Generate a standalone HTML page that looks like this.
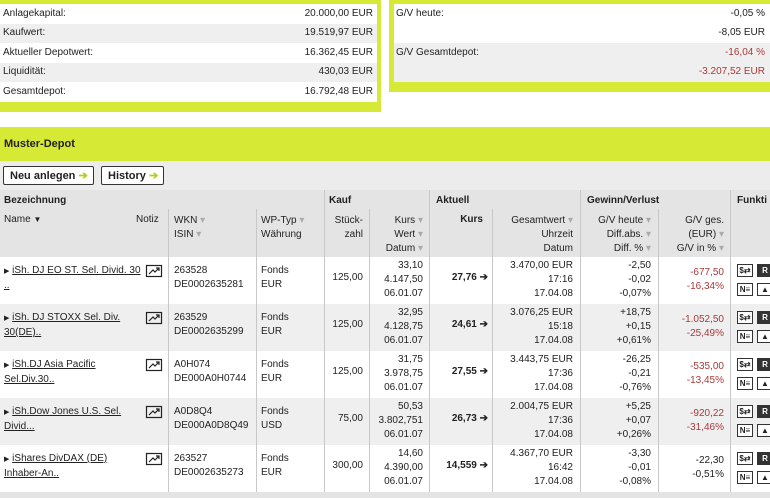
<!DOCTYPE html>
<html><head><meta charset="utf-8"><style>
*{margin:0;padding:0;box-sizing:border-box}
body{width:770px;height:498px;overflow:hidden;background:#fff;font-family:"Liberation Sans",Arial,sans-serif;font-size:10px;color:#222;position:relative}
.a{position:absolute;white-space:nowrap}
.r{position:absolute;text-align:right;white-space:nowrap}
.g{background:#d5e935}
.row{position:absolute;left:0;width:770px;height:47px}
.l{position:absolute;width:1px;background:#c8c8c8}
.red{color:#a83a3a}
u{text-decoration:underline}
.ic{position:absolute;width:16px;height:13px;border:1px solid #333;font-size:8px;font-weight:bold;line-height:11px;text-align:center;background:#fff}
.sd{color:#aaa}
</style></head><body>
<div class="a g" style="left:0;top:0;width:381px;height:112px"></div>
<div class="a" style="left:0;top:4px;width:377px;height:20px;background:#fff"></div>
<div class="a" style="left:0;top:24px;width:377px;height:19px;background:#efefef"></div>
<div class="a" style="left:0;top:43px;width:377px;height:20px;background:#fff"></div>
<div class="a" style="left:0;top:63px;width:377px;height:19px;background:#efefef"></div>
<div class="a" style="left:0;top:82px;width:377px;height:20px;background:#fff"></div>
<div class="a" style="left:3px;top:8px">Anlagekapital:</div><div class="r" style="right:397px;top:8px">20.000,00 EUR</div>
<div class="a" style="left:3px;top:27px">Kaufwert:</div><div class="r" style="right:397px;top:27px">19.519,97 EUR</div>
<div class="a" style="left:3px;top:47px">Aktueller Depotwert:</div><div class="r" style="right:397px;top:47px">16.362,45 EUR</div>
<div class="a" style="left:3px;top:66px">Liquidität:</div><div class="r" style="right:397px;top:66px">430,03 EUR</div>
<div class="a" style="left:3px;top:86px">Gesamtdepot:</div><div class="r" style="right:397px;top:86px">16.792,48 EUR</div>
<div class="a g" style="left:389px;top:0;width:381px;height:92px"></div>
<div class="a" style="left:394px;top:4px;width:376px;height:39px;background:#fff"></div>
<div class="a" style="left:394px;top:43px;width:376px;height:39px;background:#efefef"></div>
<div class="a" style="left:396px;top:8px">G/V heute:</div><div class="r" style="right:5px;top:8px">-0,05 %</div>
<div class="r" style="right:5px;top:27px">-8,05 EUR</div>
<div class="a" style="left:396px;top:47px">G/V Gesamtdepot:</div><div class="r red" style="right:5px;top:47px">-16,04 %</div>
<div class="r red" style="right:5px;top:66px">-3.207,52 EUR</div>
<div class="a g" style="left:0;top:127px;width:770px;height:34px"></div>
<div class="a" style="left:4px;top:138px;font-weight:bold;font-size:11px">Muster-Depot</div>
<div class="a" style="left:0;top:161px;width:770px;height:29px;background:#ececec"></div>
<div class="a" style="left:3px;top:166px;width:91px;height:19px;border:1px solid #333;border-radius:2px;background:#fff;font-weight:bold;font-size:11px;padding:2px 0 0 6px">Neu anlegen <span style="color:#b8cc20">➔</span></div>
<div class="a" style="left:101px;top:166px;width:63px;height:19px;border:1px solid #333;border-radius:2px;background:#fff;font-weight:bold;font-size:11px;padding:2px 0 0 6px">History <span style="color:#b8cc20">➔</span></div>
<div class="a" style="left:0;top:190px;width:770px;height:67px;background:#e4e4e4"></div>
<div class="a" style="left:4px;top:195px;font-weight:bold">Bezeichnung</div>
<div class="a" style="left:329px;top:195px;font-weight:bold">Kauf</div>
<div class="a" style="left:436px;top:195px;font-weight:bold">Aktuell</div>
<div class="a" style="left:587px;top:195px;font-weight:bold">Gewinn/Verlust</div>
<div class="a" style="left:737px;top:195px;font-weight:bold">Funkti</div>
<div class="a" style="left:4px;top:214px">Name <span style="font-size:8px">▼</span></div>
<div class="a" style="left:136px;top:214px">Notiz</div>
<div class="a" style="left:174px;top:214px;line-height:14px">WKN <span class="sd">▾</span><br>ISIN <span class="sd">▾</span></div>
<div class="a" style="left:261px;top:214px;line-height:14px">WP-Typ <span class="sd">▾</span><br>Währung</div>
<div class="r" style="right:407px;top:214px;line-height:14px">Stück-<br>zahl</div>
<div class="r" style="right:347px;top:214px;line-height:14px">Kurs <span class="sd">▾</span><br>Wert <span class="sd">▾</span><br>Datum <span class="sd">▾</span></div>
<div class="r" style="right:287px;top:214px;font-weight:bold">Kurs</div>
<div class="r" style="right:197px;top:214px;line-height:14px">Gesamtwert <span class="sd">▾</span><br>Uhrzeit<br>Datum</div>
<div class="r" style="right:119px;top:214px;line-height:14px">G/V heute <span class="sd">▾</span><br>Diff.abs. <span class="sd">▾</span><br>Diff. % <span class="sd">▾</span></div>
<div class="r" style="right:46px;top:214px;line-height:14px">G/V ges.<br>(EUR) <span class="sd">▾</span><br>G/V in % <span class="sd">▾</span></div>
<div class="row" style="top:257px;background:#fff"></div>
<div class="row" style="top:304px;background:#efefef"></div>
<div class="row" style="top:351px;background:#fff"></div>
<div class="row" style="top:398px;background:#efefef"></div>
<div class="row" style="top:445px;background:#fff"></div>
<div class="a" style="left:0;top:492px;width:770px;height:6px;background:#e4e4e4"></div>
<div class="l" style="left:168px;top:209px;height:283px"></div>
<div class="l" style="left:256px;top:209px;height:283px"></div>
<div class="l" style="left:324px;top:190px;height:302px"></div>
<div class="l" style="left:369px;top:209px;height:283px"></div>
<div class="l" style="left:429px;top:190px;height:302px"></div>
<div class="l" style="left:492px;top:209px;height:283px"></div>
<div class="l" style="left:580px;top:190px;height:302px"></div>
<div class="l" style="left:658px;top:209px;height:283px"></div>
<div class="l" style="left:730px;top:190px;height:302px"></div>

<div style="position:absolute;left:0;top:257px;width:770px;height:47px;line-height:14px">
<div class="a" style="left:4px;top:7px"><span style="font-size:7px">▶</span> <u>iSh. DJ EO ST. Sel. Divid. 30</u><br><u>..</u></div>
<div class="a" style="left:174px;top:7px">263528<br>DE0002635281</div>
<div class="a" style="left:261px;top:7px">Fonds<br>EUR</div>
<div class="r" style="right:407px;top:14px">125,00</div>
<div class="r" style="right:347px;top:2px">33,10<br>4.147,50<br>06.01.07</div>
<div class="r" style="right:282px;top:14px;font-weight:bold">27,76 ➔</div>
<div class="r" style="right:197px;top:2px">3.470,00 EUR<br>17:16<br>17.04.08</div>
<div class="r" style="right:119px;top:2px">-2,50<br>-0,02<br>-0,07%</div>
<div class="r red" style="right:46px;top:9px">-677,50<br>-16,34%</div>
</div>
<div style="position:absolute;left:0;top:304px;width:770px;height:47px;line-height:14px">
<div class="a" style="left:4px;top:7px"><span style="font-size:7px">▶</span> <u>iSh. DJ STOXX Sel. Div.</u><br><u>30(DE)..</u></div>
<div class="a" style="left:174px;top:7px">263529<br>DE0002635299</div>
<div class="a" style="left:261px;top:7px">Fonds<br>EUR</div>
<div class="r" style="right:407px;top:14px">125,00</div>
<div class="r" style="right:347px;top:2px">32,95<br>4.128,75<br>06.01.07</div>
<div class="r" style="right:282px;top:14px;font-weight:bold">24,61 ➔</div>
<div class="r" style="right:197px;top:2px">3.076,25 EUR<br>15:18<br>17.04.08</div>
<div class="r" style="right:119px;top:2px">+18,75<br>+0,15<br>+0,61%</div>
<div class="r red" style="right:46px;top:9px">-1.052,50<br>-25,49%</div>
</div>
<div style="position:absolute;left:0;top:351px;width:770px;height:47px;line-height:14px">
<div class="a" style="left:4px;top:7px"><span style="font-size:7px">▶</span> <u>iSh.DJ Asia Pacific</u><br><u>Sel.Div.30..</u></div>
<div class="a" style="left:174px;top:7px">A0H074<br>DE000A0H0744</div>
<div class="a" style="left:261px;top:7px">Fonds<br>EUR</div>
<div class="r" style="right:407px;top:14px">125,00</div>
<div class="r" style="right:347px;top:2px">31,75<br>3.978,75<br>06.01.07</div>
<div class="r" style="right:282px;top:14px;font-weight:bold">27,55 ➔</div>
<div class="r" style="right:197px;top:2px">3.443,75 EUR<br>17:36<br>17.04.08</div>
<div class="r" style="right:119px;top:2px">-26,25<br>-0,21<br>-0,76%</div>
<div class="r red" style="right:46px;top:9px">-535,00<br>-13,45%</div>
</div>
<div style="position:absolute;left:0;top:398px;width:770px;height:47px;line-height:14px">
<div class="a" style="left:4px;top:7px"><span style="font-size:7px">▶</span> <u>iSh.Dow Jones U.S. Sel.</u><br><u>Divid...</u></div>
<div class="a" style="left:174px;top:7px">A0D8Q4<br>DE000A0D8Q49</div>
<div class="a" style="left:261px;top:7px">Fonds<br>USD</div>
<div class="r" style="right:407px;top:14px">75,00</div>
<div class="r" style="right:347px;top:2px">50,53<br>3.802,751<br>06.01.07</div>
<div class="r" style="right:282px;top:14px;font-weight:bold">26,73 ➔</div>
<div class="r" style="right:197px;top:2px">2.004,75 EUR<br>17:36<br>17.04.08</div>
<div class="r" style="right:119px;top:2px">+5,25<br>+0,07<br>+0,26%</div>
<div class="r red" style="right:46px;top:9px">-920,22<br>-31,46%</div>
</div>
<div style="position:absolute;left:0;top:445px;width:770px;height:47px;line-height:14px">
<div class="a" style="left:4px;top:7px"><span style="font-size:7px">▶</span> <u>iShares DivDAX (DE)</u><br><u>Inhaber-An..</u></div>
<div class="a" style="left:174px;top:7px">263527<br>DE0002635273</div>
<div class="a" style="left:261px;top:7px">Fonds<br>EUR</div>
<div class="r" style="right:407px;top:14px">300,00</div>
<div class="r" style="right:347px;top:2px">14,60<br>4.390,00<br>06.01.07</div>
<div class="r" style="right:282px;top:14px;font-weight:bold">14,559 ➔</div>
<div class="r" style="right:197px;top:2px">4.367,70 EUR<br>16:42<br>17.04.08</div>
<div class="r" style="right:119px;top:2px">-3,30<br>-0,01<br>-0,08%</div>
<div class="r" style="right:46px;top:9px">-22,30<br>-0,51%</div>
</div>

<svg class="a" style="left:0;top:0" width="770" height="498">
<g fill="none" stroke="#222" stroke-width="1.2">
<g transform="translate(146,265)"><rect x="0.5" y="0.5" width="15" height="11"/><path d="M3 9 L7 5 L9 7 L13 3 M10 3 L13 3 L13 6"/></g>
<g transform="translate(146,312)"><rect x="0.5" y="0.5" width="15" height="11"/><path d="M3 9 L7 5 L9 7 L13 3 M10 3 L13 3 L13 6"/></g>
<g transform="translate(146,359)"><rect x="0.5" y="0.5" width="15" height="11"/><path d="M3 9 L7 5 L9 7 L13 3 M10 3 L13 3 L13 6"/></g>
<g transform="translate(146,406)"><rect x="0.5" y="0.5" width="15" height="11"/><path d="M3 9 L7 5 L9 7 L13 3 M10 3 L13 3 L13 6"/></g>
<g transform="translate(146,453)"><rect x="0.5" y="0.5" width="15" height="11"/><path d="M3 9 L7 5 L9 7 L13 3 M10 3 L13 3 L13 6"/></g>
</g>
</svg>
<div class="ic" style="left:737px;top:264px">$⇄</div><div class="ic" style="left:757px;top:264px;background:#333;color:#fff">R</div>
<div class="ic" style="left:737px;top:283px">N≡</div><div class="ic" style="left:757px;top:283px">▲</div>
<div class="ic" style="left:737px;top:311px">$⇄</div><div class="ic" style="left:757px;top:311px;background:#333;color:#fff">R</div>
<div class="ic" style="left:737px;top:330px">N≡</div><div class="ic" style="left:757px;top:330px">▲</div>
<div class="ic" style="left:737px;top:358px">$⇄</div><div class="ic" style="left:757px;top:358px;background:#333;color:#fff">R</div>
<div class="ic" style="left:737px;top:377px">N≡</div><div class="ic" style="left:757px;top:377px">▲</div>
<div class="ic" style="left:737px;top:405px">$⇄</div><div class="ic" style="left:757px;top:405px;background:#333;color:#fff">R</div>
<div class="ic" style="left:737px;top:424px">N≡</div><div class="ic" style="left:757px;top:424px">▲</div>
<div class="ic" style="left:737px;top:452px">$⇄</div><div class="ic" style="left:757px;top:452px;background:#333;color:#fff">R</div>
<div class="ic" style="left:737px;top:471px">N≡</div><div class="ic" style="left:757px;top:471px">▲</div>
</body></html>
